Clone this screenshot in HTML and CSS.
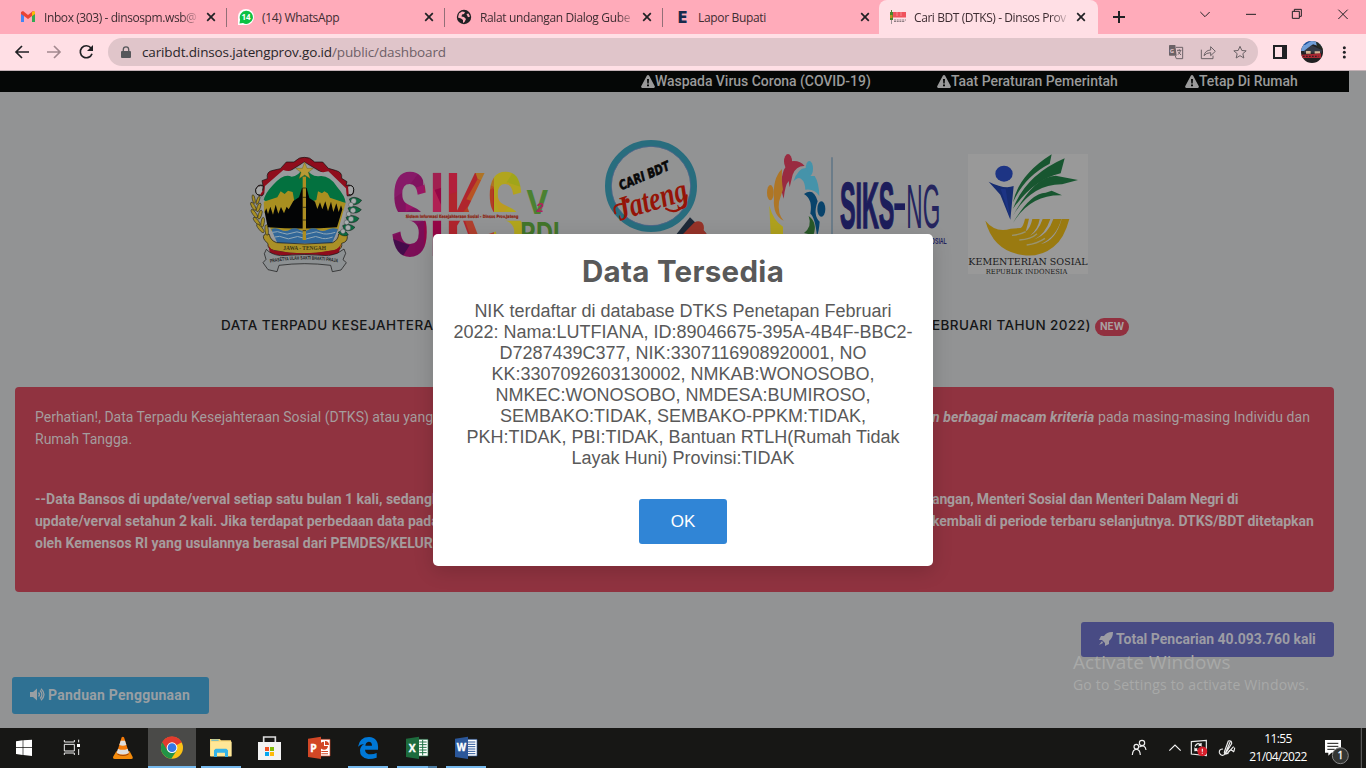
FILE: index.html
```html
<!DOCTYPE html>
<html lang="id">
<head>
<meta charset="utf-8">
<title>Cari BDT (DTKS)</title>
<link rel="stylesheet" href="styles.css">
</head>
<body>
<div class="screen">
  <header class="tabs">
    <div class="tab">
      <svg class="fav" viewBox="0 0 16 16"><path d="M1 3v10h3V7l4 3 4-3v6h3V3l-2-1-5 4-5-4z" fill="#ea4335"/><path d="M1 5v8h3V7z" fill="#4285f4"/><path d="M12 7v6h3V5z" fill="#34a853"/><path d="M12 3l2-1 1 1v2l-3 2z" fill="#fbbc04"/></svg>
      <span class="label fade t1">Inbox (303) - dinsospm.wsb@</span><svg class="x" viewBox="0 0 10 10"><path d="M1.200 1.200l7.600 7.600M8.800 1.200l-7.600 7.600"/></svg>
    </div>
    <div class="tab">
      <svg class="fav" viewBox="0 0 16 16"><path d="M0 16V8a8 8 0 1 1 8 8z" fill="#fff"/><path d="M1.500 14.500l.6-4A6.600 6.600 0 1 1 5 14z" fill="#0ec143"/><text x="8" y="11" text-anchor="middle" font-size="8" font-weight="700" fill="#fff">14</text></svg>
      <span class="label t2">(14) WhatsApp</span><svg class="x" viewBox="0 0 10 10"><path d="M1.200 1.200l7.600 7.600M8.800 1.200l-7.600 7.600"/></svg>
    </div>
    <div class="tab">
      <svg class="fav" viewBox="0 0 16 16"><circle cx="8" cy="8" r="7.200" fill="#202124"/><path d="M3 4.500l3-2 3 .5-1 2-2 .5-.5 2 2.500.5 2 2-1.500 3-1.500 1v-3l-2-1.500-3-1zM10.500 5l2-.5 1.500 3-2 .8z" fill="#ffabba"/></svg>
      <span class="label fade t3">Ralat undangan Dialog Gube</span><svg class="x" viewBox="0 0 10 10"><path d="M1.200 1.200l7.600 7.600M8.800 1.200l-7.600 7.600"/></svg>
    </div>
    <div class="tab last">
      <svg class="fav" viewBox="0 0 16 16"><text x="4" y="14" font-family="Inter" font-size="16" font-weight="900" textLength="9" lengthAdjust="spacingAndGlyphs" fill="#172a4c">E</text></svg>
      <span class="label t4">Lapor Bupati</span><svg class="x" viewBox="0 0 10 10"><path d="M1.200 1.200l7.600 7.600M8.800 1.200l-7.600 7.600"/></svg>
    </div>
    <div class="tab active">
      <svg class="fav" viewBox="0 0 16 16"><path d="M1 1h1v2H1zM0 3h3v8H0z" fill="#48882e"/><path d="M0 6h2.500v3H0z" fill="#b99120"/><path d="M1 11h1v4H1z" fill="#a09498"/><path d="M3 3h13v5.500H3z" fill="#f0525c"/><path d="M4 11h12M4 12.500h11" stroke="#8c7c81" stroke-dasharray="2 .7" fill="none"/><path d="M7 3v4M11 3v4" stroke="#f78a91" fill="none"/></svg>
      <span class="label fade t5">Cari BDT (DTKS) - Dinsos Prov</span><svg class="x" viewBox="0 0 10 10"><path d="M1.200 1.200l7.600 7.600M8.800 1.200l-7.600 7.600"/></svg>
    </div>
    <svg class="window-controls" viewBox="696 0 804 102" fill="none" stroke="#202124"><path d="M741 51h36M759 33v36" stroke-width="6"/><path d="M1003 36l14 14 14-14M1140 43h30M1279 34h21v21h-21zM1285 34v-6h21v21h-6M1417 29l28 28M1445 29l-28 28" stroke-width="3"/></svg>
  </header>
  <nav class="toolbar">
    <svg class="nav-icons" viewBox="0 102 324 108" fill="none" stroke-width="5"><path d="M87 156H49M66 138l-18 18 18 18" stroke="#202124"/><path d="M141 156h38M162 138l18 18-18 18" stroke="#a3898f"/><path d="M273 144a18 18 0 1 0 3 17" stroke="#202124"/><path d="M279 135v18h-18z" fill="#202124"/></svg>
    <div class="omnibox">
      <svg class="lock" viewBox="0 0 10 13"><path d="M1 5h8a1 1 0 0 1 1 1v5a1 1 0 0 1-1 1H1a1 1 0 0 1-1-1V6a1 1 0 0 1 1-1z" fill="#55565a"/><path d="M2.300 5V3.500a2.700 2.700 0 0 1 5.400 0V5" fill="none" stroke="#55565a" stroke-width="1.300"/></svg>
      <span class="url">caribdt.dinsos.jatengprov.go.id<span class="path">/public/dashboard</span></span>
      <svg class="omni-icons" viewBox="900 114 252 84" fill="none" stroke="#6b6266" stroke-width="3"><path d="M909 137q0-2 2-2h17l4 32h-21q-2 0-2-2z" fill="#6b6266" stroke="none"/><text x="911" y="158" font-size="18" font-weight="700" fill="#e0c5ca" stroke="none">G</text><path d="M930 142h20v34h-19l-3-8M933 151h13M940 148v4M944 151q-3 9-8 13M936 155l9 10"/><path d="M1006 149v27h35v-9M1014 167q3-16 20-17v-10l14 14-14 13v-9q-13 0-20 9z"/><path d="M1122 139l5.500 12.500 13 1-10 8.500 3 13-11.500-7-11.500 7 3-13-10-8.500 13-1z"/></svg>
    </div>
    <svg class="menu-icons" viewBox="1176 102 324 108"><path d="M1221 135h42v42h-42zM1227 141v30h21v-30z" fill="#202124" fill-rule="evenodd"/><clipPath id="avatar"><circle cx="1338" cy="156" r="33"/></clipPath><g clip-path="url(#avatar)"><path d="M1305 123h66v66h-66z" fill="#202022"/><path d="M1305 123h66v20l-30-10-24 20h-12z" fill="#709ed8"/><path d="M1305 123h30l-18 12h-12z" fill="#1d4f9c"/><path d="M1350 126h21v24l-18-9z" fill="#252b22"/><path d="M1314 153l22-17 32 14v8h-54z" fill="#343a45"/><path d="M1320 153h14v8h-14zM1346 154h16v7h-16z" fill="#d4b696"/><path d="M1305 164l60-4v14h-60z" fill="#a92732"/><path d="M1311 169h46" stroke="#3b1b24" stroke-width="4" stroke-dasharray="5 4"/></g><g fill="#202124"><circle cx="1435" cy="143" r="4.500"/><circle cx="1435" cy="157" r="4.500"/><circle cx="1435" cy="171" r="4.500"/></g></svg>
  </nav>

  <main class="page">
    <div class="marquee">
      <span class="note m1"><svg viewBox="0 0 14 13"><path d="M7 0q.8 0 1.200.7l5.600 10.600q.4 1.200-1 1.700H1.200q-1.400-.5-1-1.700L5.800.7Q6.200 0 7 0zM6 4l.3 4.500h1.400L8 4zM6 9.500v1.800h2V9.500z" fill-rule="evenodd"/></svg>Waspada Virus Corona (COVID-19)</span>
      <span class="note m2"><svg viewBox="0 0 14 13"><path d="M7 0q.8 0 1.200.7l5.600 10.600q.4 1.200-1 1.700H1.200q-1.400-.5-1-1.700L5.800.7Q6.200 0 7 0zM6 4l.3 4.500h1.400L8 4zM6 9.500v1.800h2V9.500z" fill-rule="evenodd"/></svg>Taat Peraturan Pemerintah</span>
      <span class="note m3"><svg viewBox="0 0 14 13"><path d="M7 0q.8 0 1.200.7l5.600 10.600q.4 1.200-1 1.700H1.200q-1.400-.5-1-1.700L5.800.7Q6.200 0 7 0zM6 4l.3 4.500h1.400L8 4zM6 9.500v1.800h2V9.500z" fill-rule="evenodd"/></svg>Tetap Di Rumah</span>
    </div>

    <div class="logos">
      <svg class="logo crest" viewBox="18 72 360 360">
        <path d="M66 198Q46 196 47 179Q52 161 69 166L66 152 82 146Q78 124 99 121L121 116 139 96 162 96Q178 80 193 82Q209 80 224 96L248 96 265 115 286 121Q308 126 305 145L321 155 318 166Q337 161 341 178Q344 198 322 198L284 150 193 96 106 150z" fill="#8f0d1c" stroke="#111" stroke-width="2"/>
        <path d="M60 195Q46 196 47 179Q52 163 70 168L68 182M324 168Q340 163 341 178Q341 198 326 194" fill="#a5a6a7" stroke="#111" stroke-width="3"/>
        <path d="M75 168L130 120Q160 132 193 96Q230 135 265 124L318 175 320 198 310 240 318 248 300 306 275 338H112L78 310 63 240 72 200z" fill="#999b9d"/>
        <path d="M71 210Q75 190 99 165Q131 128 155 140Q176 139 193 108Q212 140 235 139Q267 133 291 170Q316 199 317 218L260 225H100z" fill="#03713f"/>
        <path d="M71 215L112 202 122 184 134 192 144 182 158 186 163 214 185 216H210L229 210 234 184 246 190 253 184 263 190 270 203 317 219 310 244 294 302H94L72 244z" fill="#a98f20"/>
        <path d="M74 246l5-11 5 17 7-22 8 24 8-30 8 27 8-20 9 19 8-20 6 8 14-25 17-11 9-28h14l8 30 17 11 7 22 8-20 7 21 9-24 8 30 9-29 7 31 9-26 7 26 7-20 4 12-16 54q-105 7-208 0z" fill="#030405"/>
        <path d="M94 297q14-6 28 2t28 0 28 0 28 0 28 0 28 0 32-2l-18 43H112z" fill="#316799"/><path d="M98 307q15-5 29 2t29 0 29 0 29 0 29 0 43-2M105 321q14-5 27 2t27 0 27 0 27 0 27 0 38-2" fill="none" stroke="#91a8b7" stroke-width="3"/>
        <path d="M188 140h10v190h-10z" fill="#ad8e22"/><path d="M188 174h10M188 202h10M188 232h10M188 270h10M188 302h10" stroke="#111" stroke-width="2"/>
        <path d="M194 96l7 19h19l-15 12 6 19-17-11-17 11 6-19-16-12h20z" fill="#b79a35" stroke="#514913"/>
        <path d="M77 312q-12 5-3 19l10 10q-3 15 17 20 90 22 192-1 15-5 12-20 18-4 17-20-3-18-26-8-1 18-18 26-83 8-168 0-19-6-22-25z" fill="#aa9027" stroke="#111" stroke-width="2"/>
        <path d="M85 343q4 19 28 20 78 14 156-1 25 0 34-20l-7 29q-98 20-206 0z" fill="#8f0d1c"/>
        <path d="M79 358l-6 13 5 17-9 10 15 21 27 6 6-19q77-10 155 0l5 19 26-5 16-22-10-9 8-19-5-13q-17 16-46 20-73-7-145 0-29-4-42-19z" fill="#8c9092" stroke="#111" stroke-width="2"/>
        <text x="194" y="360" font-family="Liberation Serif" font-size="16" font-weight="700" text-anchor="middle" textLength="128" lengthAdjust="spacingAndGlyphs" fill="#3a3514">JAWA - TENGAH</text>
        <path id="motto" d="M91 398q102-19 206 0" fill="none"/><text font-family="Liberation Sans" font-size="15" font-weight="700" fill="#1b1d1d"><textPath href="#motto" textLength="203" lengthAdjust="spacingAndGlyphs">PRASETYA ULAH SAKTI BHAKTI PRAJA</textPath></text>
        <g fill="#a89026" stroke="#151510" stroke-width="1.500"><ellipse cx="41" cy="207" rx="4" ry="13" transform="rotate(-10 41 207)"/><ellipse cx="54" cy="211" rx="4" ry="13" transform="rotate(20 54 211)"/><ellipse cx="40" cy="229" rx="5" ry="14" transform="rotate(-30 40 229)"/><ellipse cx="56" cy="232" rx="5" ry="14" transform="rotate(20 56 232)"/><ellipse cx="43" cy="251" rx="5" ry="15" transform="rotate(-35 43 251)"/><ellipse cx="60" cy="254" rx="5" ry="14" transform="rotate(18 60 254)"/><ellipse cx="50" cy="274" rx="5" ry="15" transform="rotate(-38 50 274)"/><ellipse cx="68" cy="277" rx="5" ry="15" transform="rotate(8 68 277)"/><ellipse cx="61" cy="295" rx="5" ry="16" transform="rotate(-40 61 295)"/><ellipse cx="80" cy="300" rx="5" ry="16" transform="rotate(-5 80 300)"/></g>
        <g fill="#0b6a40" stroke="#101915" stroke-width="1.500"><path d="M328 207q15-12 37 4-10 15-30 13z"/><path d="M324 234q17-13 40 5-12 14-34 9z"/><path d="M318 262q18-13 39 3-9 17-32 12z"/><path d="M308 287q17-11 37 5-12 15-32 8z"/><path d="M294 307q20-14 31 8-18 8-31-8z"/></g>
        <g fill="#a8adae" stroke="#30383a"><circle cx="341" cy="213" r="8"/><circle cx="333" cy="224" r="7"/><circle cx="339" cy="241" r="8"/><circle cx="326" cy="252" r="7"/><circle cx="333" cy="267" r="8"/><circle cx="320" cy="277" r="7"/><circle cx="324" cy="293" r="8"/><circle cx="309" cy="304" r="7"/></g>
      </svg>
      <svg class="logo siks" viewBox="450 72 516 360">
        <defs><clipPath id="siks-word"><text x="452" y="379" font-family="Liberation Sans" font-size="362" font-weight="700" textLength="402" lengthAdjust="spacingAndGlyphs" stroke="#000">SIKS</text></clipPath></defs>
        <g clip-path="url(#siks-word)">
          <path d="M450 110h100v280H450z" fill="#80145f"/><path d="M450 110h100l-54 72-46 30z" fill="#871a68"/><path d="M497 183l60-20v50l-60 33z" fill="#981565"/><path d="M450 323l110-55v120H450z" fill="#7c0e57"/><path d="M450 323l59 23-28 44h-31z" fill="#440c4b"/>
          <path d="M553 110h60v280h-60z" fill="#950646"/><path d="M553 110h60v60l-60 20z" fill="#a12050"/><path d="M556 204l25-30 32 72h-57z" fill="#b02053"/>
          <path d="M615 110h150v280H615z" fill="#b0252d"/><path d="M615 110h60v66l-60 22z" fill="#b31e3b"/><path d="M700 110h68v66l-55-29z" fill="#af7425"/><path d="M713 147l54 26-63 43-25-8z" fill="#b85422"/><path d="M760 173v73h-90l27-32z" fill="#b23f22"/><path d="M675 272h90v60h-69z" fill="#b1402e"/>
          <path d="M762 110h92v280h-92z" fill="#b1a51e"/><path d="M829 110h30v66l-59-19z" fill="#a0a51a"/><path d="M762 206l43-50 24 47-46 53z" fill="#bc9b20"/>
        </g>
        <path d="M450 246h396v26H450z" fill="#929394"/>
        <text x="497" y="263" font-family="DejaVu Sans" font-size="13" font-weight="700" textLength="338" lengthAdjust="spacingAndGlyphs" fill="#8c210f" stroke="#8c210f" stroke-width=".6">Sistem Informasi Kesejahteraan Sosial - Dinsos Prov.Jateng</text>
        <text x="858" y="253" font-family="Inter" font-size="98" font-weight="700" textLength="68" lengthAdjust="spacingAndGlyphs" fill="#4b8131">V</text><text x="889" y="246" font-size="40" font-weight="700" font-style="italic" fill="#af235c">2</text><text x="841" y="343" font-family="Inter" font-size="90" font-weight="700" textLength="118" lengthAdjust="spacingAndGlyphs" fill="#42752a">RDI</text>
      </svg>
      <svg class="logo search-logo" viewBox="120 24 360 408">
        <path d="M348 314l42-52 48 48v20h-90z" fill="#1d2938"/><path d="M367 314l35-36q12-8 23-1 9 8 6 24l15 18-8 20h-75z" fill="#963329"/><circle cx="273" cy="168" r="128" fill="#929393" stroke="#286d7e" stroke-width="20"/><circle cx="273" cy="168" r="119" fill="none" stroke="#58628d" stroke-width="2"/>
        <text transform="translate(184 181) rotate(-23)" font-family="DejaVu Sans" font-size="39" font-weight="700" font-style="italic" textLength="161" lengthAdjust="spacingAndGlyphs" fill="#080808" stroke="#080808" stroke-width="2">CARI BDT</text>
        <text transform="translate(180 272) rotate(-17)" font-family="Liberation Serif" font-size="100" font-weight="700" font-style="italic" textLength="218" lengthAdjust="spacingAndGlyphs" fill="#951407">Jateng</text>
        <path d="M166 250q-11-26 20-28M318 236q28 18 52-8 10-12 10-32" fill="none" stroke="#951407" stroke-width="6" stroke-linecap="round"/><circle cx="202" cy="212" r="7" fill="#951407"/>
      </svg>
      <svg class="logo siksng" viewBox="36 42 564 360">
        <g fill="#992b40"><ellipse cx="114" cy="64" rx="12" ry="22"/><path d="M98 101q6-24 25-37 26-4 41 14-26-1-36 26l-9 38-3-19q-11 12-15 53-14-38-3-75z"/></g><g fill="#4593aa"><ellipse cx="178" cy="86" rx="11" ry="23"/><path d="M130 125q14-43 40-41l10 24h14q13 20 14 60-14-23-42-19-1-23-10-30-10-13-26 6z"/></g><g fill="#ae7626"><ellipse cx="61" cy="158" rx="10" ry="23"/><path d="M96 87q-29 28-24 89-4 50 29 66-19-21-14-57l12-37q-5-24-3-61z"/></g><path d="M58 197q12 45 41 63v42H63z" fill="#afa11e"/><g fill="#08436b"><ellipse cx="214" cy="207" rx="12" ry="23"/><path d="M162 162q29-21 41 22-15 42 6 61-2 28-8 43-6-57-20-67 8-43-19-59z"/></g><path d="M176 228q28 21 14 58l-28-7q25-19 14-51z" fill="#285828"/><path d="M246 52v250" stroke="#587184" stroke-width="4"/>
        <text x="270" y="265" font-family="Liberation Sans" font-size="194" font-weight="700" textLength="163" lengthAdjust="spacingAndGlyphs" fill="#1d1d5b" stroke="#1d1d5b" stroke-width="5">SIKS</text><path d="M433 190h32v20h-32z" fill="#1d1d5b"/><text x="469" y="265" font-family="Liberation Sans" font-size="190" textLength="102" lengthAdjust="spacingAndGlyphs" fill="#25255f">NG</text><text x="543" y="311" font-family="Liberation Sans" font-size="25" font-weight="700" textLength="47" lengthAdjust="spacingAndGlyphs" fill="#24245d">OSIAL</text>
      </svg>
      <svg class="logo kemensos" viewBox="654 42 360 360">
        <path d="M654 42h360v360H654z" fill="#999"/><ellipse cx="762" cy="101" rx="26" ry="24" fill="#1d3484"/><path d="M716 125q47 24 75 13l-10 101-30-75z" fill="#172d72"/><path d="M752 147h15l13 85z" fill="#1d3484"/>
        <g fill="#185630"><path d="M789 187q17-82 116-144l-6 28q-77 40-110 116z"/><path d="M789 206q39-101 155-151l-12 45q-80 18-143 106z"/><path d="M789 227q64-118 128-120l67 13-48 13q-91-1-147 94z"/><path d="M789 249q51-89 98-91l18-6 31 14q-95-3-147 83z"/></g>
        <path d="M706 242q31 38 76 24l30-2q8-4 13-28h12q-6 26-10 38 14-8 20-37h22q-5 31-29 50 24-11 38-50h23q-15 46-49 62 43-15 58-62h24q-14 53-61 75 44-9 62-75h23q-16 61-48 84-40 32-92 24-88-12-112-103z" fill="#9a7a10"/><path d="M786 286q26-2 41-11M808 300q35-2 53-19M830 315q31-4 55-20" fill="none" stroke="#99936e" stroke-width="4"/>
        <text x="655" y="374" font-family="DejaVu Serif" font-size="27" textLength="358" lengthAdjust="spacingAndGlyphs" fill="#191919">KEMENTERIAN SOSIAL</text><text x="707" y="401" font-family="DejaVu Serif" font-size="21" textLength="245" lengthAdjust="spacingAndGlyphs" fill="#191919">REPUBLIK INDONESIA</text>
      </svg>
    </div>

    <h1 class="heading"><span class="h-left">DATA TERPADU KESEJAHTERA</span><span class="h-right">EBRUARI TAHUN 2022)</span><span class="new">NEW</span></h1>

    <section class="alert">
      <p class="intro"><span class="a1">Perhatian!, Data Terpadu Kesejahteraan Sosial (DTKS) atau yang</span><span class="a2"><b><i>n berbagai macam kriteria</i></b> pada masing-masing Individu dan</span><span>Rumah Tangga.</span></p>
      <p class="detail"><span class="b1">--Data Bansos di update/verval setiap satu bulan 1 kali, sedangk</span><span class="b2">angan, Menteri Sosial dan Menteri Dalam Negri di</span><span class="b3">update/verval setahun 2 kali. Jika terdapat perbedaan data pada</span><span class="b4">kembali di periode terbaru selanjutnya. DTKS/BDT ditetapkan</span><span class="b5">oleh Kemensos RI yang usulannya berasal dari PEMDES/KELUR</span></p>
    </section>
    <div class="total"><svg viewBox="0 0 14 14"><path d="M14 0Q8-.2 5 4H2L0 8h3l3 3v3l4-2V9q4-3 4-9zM3 9l-3 4 4-2z"/></svg><span>Total Pencarian 40.093.760 kali</span></div>
    <div class="guide"><svg viewBox="0 0 15 13"><path d="M0 4h3l4-3.500v12L3 9H0z"/><path d="M8.500 4.500q2 2 0 4M10 2.500q4 4 0 8M11 .8q6 5.700 0 11.400" fill="none" stroke="#999fa3" stroke-width="1.300"/></svg><span>Panduan Penggunaan</span></div>
  </main>

  <footer class="taskbar">
    <svg class="w48" viewBox="0 354 144 120"><path d="M48 394l20-3v21H48zM70 391l26-2v23H70zM48 414h20v21l-20-3zM70 414h26v24l-26-3z" fill="#fff"/></svg>
    <svg class="w50" viewBox="144 354 150 120" fill="none" stroke="#eee" stroke-width="3"><path d="M193 390v6h30v-6M193 435v-6h30v6M193 403h30v20h-30zM236 389v8M236 417v18"/><path d="M231 402h9v9h-9z" fill="#fff" stroke="none"/></svg>
    <svg class="w50" viewBox="294 354 150 120"><path d="M349 424h40l9 17q2 6-4 6h-50q-6 0-5-6z" fill="#f48b0b"/><path d="M349 427l4 7q16 8 32 0l4-7z" fill="#a94a05"/><path d="M365 382q3-4 7 0l15 48q-18 10-37 0z" fill="#f47b0a"/><path d="M362 392h13l4 13q-10 4-21 0zM354 416q14 7 29 0l4 13q-18 9-37 0z" fill="#dedede"/></svg>
    <svg class="w48" viewBox="444 354 144 120"><path d="M444 354h144v120H444z" fill="#4a4a48"/><circle cx="516" cy="413" r="33" fill="#fbc116"/><path d="M487 397a33 33 0 0 1 58 0l-29 16z" fill="#e33b2e"/><path d="M487 397a33 33 0 0 0 27 49l17-26-15-8z" fill="#229447"/><path d="M516 397h29q-13-17-30-17-18 0-28 17l15 24z" fill="#e33b2e"/><circle cx="516" cy="413" r="16" fill="#fff"/><circle cx="516" cy="413" r="13" fill="#3478e5"/><path d="M444 468h144v6H444z" fill="#76b9ed"/></svg>
    <svg class="w49" viewBox="588 354 147 120"><path d="M630 387h29l4 4h30v48h-63z" fill="#f9d978"/><path d="M634 389h22v3h-22z" fill="#43b2df"/><path d="M632 395h63v44h-63z" fill="#ffe797"/><path d="M642 441v-20l5-5h32l5 5v20h-9v-13h-24v13z" fill="#35b4e8"/><path d="M603 468h120v6H603z" fill="#76b9ed"/></svg>
    <svg class="w49" viewBox="735 354 147 120"><path d="M791 398v-17h35v17" fill="none" stroke="#ddd" stroke-width="5"/><path d="M774 396h69v54h-69z" fill="#f3f3f3"/><path d="M795 411h12v12h-12z" fill="#f35325"/><path d="M810 411h12v12h-12z" fill="#81bc06"/><path d="M795 426h12v12h-12z" fill="#05a6f0"/><path d="M810 426h12v12h-12z" fill="#ffba08"/></svg>
    <svg class="w49" viewBox="882 354 147 120"><path d="M957 388h33v50h-33z" fill="#fff" stroke="#d24625" stroke-width="2"/><path d="M972 395v13h12a12 12 0 1 1-12-13zM975 393a12 12 0 0 1 12 12h-12zM964 423h20v3h-20zM964 430h20v3h-20z" fill="#d24625"/><path d="M924 386l39-6v67l-39-6z" fill="#d24726"/><text x="931" y="425" font-size="31" font-weight="700" fill="#fff" stroke="#fff">P</text></svg>
    <svg class="w49" viewBox="1029 354 147 120"><path d="M1074 410q5-29 33-29 30 2 27 38h-39q1 14 18 14 8 0 17-4v14q-11 4-25 4-26-4-25-26 1-12 12-19-11 1-18 8zM1096 407h20q0-12-10-12-9 1-10 12z" fill="#0078d7" fill-rule="evenodd"/><path d="M1044 468h120v6h-120z" fill="#76b9ed"/></svg>
    <svg class="w49" viewBox="1176 354 147 120"><path d="M1250 388h34v50h-34z" fill="#fff" stroke="#217346" stroke-width="2"/><path d="M1258 396h22M1258 404h22M1258 412h22M1258 420h22M1258 428h22M1268 390v46" stroke="#217346" stroke-width="3"/><path d="M1218 386l39-6v67l-39-6z" fill="#1d6b3d"/><text x="1226" y="425" font-size="31" font-weight="700" fill="#fff" stroke="#fff">X</text><path d="M1191 468h93v6h-93z" fill="#76b9ed"/><path d="M1284 468h27v6h-27z" fill="#4d7da3"/></svg>
    <svg class="w49" viewBox="1323 354 147 120"><path d="M1397 388h34v50h-34z" fill="#fff" stroke="#2b579a" stroke-width="2"/><path d="M1404 396h22M1404 403h22M1404 410h22M1404 417h22M1404 424h22M1404 431h22" stroke="#2b579a" stroke-width="3"/><path d="M1365 386l39-6v67l-39-6z" fill="#2b579a"/><text x="1370" y="424" font-size="29" font-weight="700" textLength="28" lengthAdjust="spacingAndGlyphs" fill="#fff" stroke="#fff">W</text><path d="M1338 468h120v6h-120z" fill="#76b9ed"/></svg>
    <svg class="tray" viewBox="360 384 375 120" fill="none" stroke="#eee" stroke-width="3.500"><circle cx="426" cy="429" r="8"/><circle cx="409" cy="440" r="7"/><path d="M397 465q1-17 12-17t12 17M418 441q18-9 20 9M508 452l17-17 17 17"/><path d="M574 425l45-4v46l-45-5z"/><path d="M585 439q8-15 18-3v-7M603 436h-7M603 445q-8 14-18 2v7M585 447h7" stroke-width="4"/><circle cx="607" cy="454" r="13" fill="#d71f2b" stroke="#d71f2b"/><path d="M607 446v9M607 458v3"/><path d="M669 447q-12 0-11 11 6 13 17 5l20-32q1-11-10-8l-11 30q-4 12 7 8l20-21M683 462q4-16 15-10 4 9 6-9M692 422l-17 40"/></svg>
    <div class="clock"><span>11:55</span><span class="date">21/04/2022</span></div>
    <svg class="notice" viewBox="933 384 165 120"><path d="M975 420h48v38h-29l-9 9v-9h-10z" fill="#fff"/><path d="M982 430h33M982 439h33M982 448h22" stroke="#171715" stroke-width="3"/><circle cx="1021" cy="467" r="24" fill="#343634" stroke="#888" stroke-width="3"/><text x="1021" y="477" text-anchor="middle" font-size="31" fill="#fff" stroke="#fff">1</text><path d="M1084 384v120" stroke="#666" stroke-width="3"/></svg>
  </footer>

  <aside class="watermark"><p class="wm1">Activate Windows</p><p class="wm2">Go to Settings to activate Windows.</p></aside>
  <div class="modal" role="dialog">
    <h2>Data Tersedia</h2>
    <p>NIK terdaftar di database DTKS Penetapan Februari<br>2022: Nama:LUTFIANA, ID:89046675-395A-4B4F-BBC2-<br>D7287439C377, NIK:3307116908920001, NO<br>KK:3307092603130002, NMKAB:WONOSOBO,<br>NMKEC:WONOSOBO, NMDESA:BUMIROSO,<br>SEMBAKO:TIDAK, SEMBAKO-PPKM:TIDAK,<br>PKH:TIDAK, PBI:TIDAK, Bantuan RTLH(Rumah Tidak<br>Layak Huni) Provinsi:TIDAK</p>
    <button>OK</button>
  </div>
</div>
</body>
</html>
```
FILE: styles.css
```css
* { box-sizing: border-box; }
body { margin: 0; font-family: "Open Sans", "Noto Sans", sans-serif; }
p, h1, h2 { margin: 0; }
svg { display: block; flex: none; }
.screen { position: relative; width: 1366px; height: 768px; overflow: hidden; display: flex; flex-direction: column; }

.tabs { height: 34px; background: #ffabba; display: flex; padding-left: 9px; flex: none; }
.tab { width: 218px; height: 34px; display: flex; align-items: center; padding: 0 11px 0 11px; position: relative; font-size: 12px; color: #3e2d32; letter-spacing: -.16px; }
.tab:not(.last):not(.active)::after { content: ""; position: absolute; right: 0; top: 8px; width: 1px; height: 19px; background: #926f77; }
.tab.active { background: #ffdfe5; border-radius: 8px 8px 0 0; margin-left: -2px; width: 219px; padding-right: 12px; }
.fav { width: 16px; height: 16px; margin-right: 8px; }
.label { flex: 1; white-space: nowrap; overflow: hidden; }
.fade { -webkit-mask-image: linear-gradient(90deg, #000 88%, transparent); mask-image: linear-gradient(90deg, #000 88%, transparent); margin-right: 6px; }
.t1 { letter-spacing: -.41px; }
.t3 { letter-spacing: -.36px; }
.t4 { letter-spacing: -.33px; }
.t2 { letter-spacing: -.3px; }
.t5 { letter-spacing: -.42px; }
.x { width: 10px; height: 10px; fill: none; stroke: #202124; stroke-width: 1.7; }
.window-controls { width: 268px; height: 34px; }

.toolbar { height: 37px; background: #ffdfe5; border-bottom: 1px solid #c3b1b5; display: flex; align-items: center; flex: none; }
.nav-icons, .menu-icons { width: 108px; height: 36px; }
.omnibox { width: 1150px; height: 28px; border-radius: 14px; background: #e0c5ca; display: flex; align-items: center; padding: 0 8px 0 13px; }
.lock { width: 10px; height: 13px; }
.url { flex: 1; margin-left: 11px; font-size: 13.500px; color: #2a2529; letter-spacing: -.13px; white-space: nowrap; }
.path { color: #6e6067; }
.omni-icons { width: 84px; height: 28px; }

.page { height: 657px; background: #929394; font-family: Roboto, sans-serif; font-size: 14px; display: flex; flex-direction: column; flex: none; }
.marquee { width: 1349px; height: 21px; background: #050706; display: flex; align-items: center; padding: 0 0 1px 641px; color: #9a9a9a; font-weight: 500; flex: none; }
.note { display: flex; align-items: center; white-space: nowrap; letter-spacing: -.04px; }
.note svg { width: 14px; height: 13px; fill: #9a9a9a; }
.m1 { width: 296px; }
.m2 { width: 248px; }

.logos { display: flex; align-items: flex-end; height: 182px; padding-left: 246px; flex: none; }
.logo { height: 120px; }
.crest { width: 120px; }
.siks { width: 172px; margin-left: 24px; }
.search-logo { width: 120px; height: 136px; margin-left: 38px; }
.siksng { width: 188px; margin-left: 42px; }
.kemensos { width: 120px; margin-left: 18px; }

.heading { display: flex; align-items: center; height: 113px; padding: 0 0 12px 221px; font: 500 13.500px Inter, sans-serif; color: #151617; white-space: nowrap; flex: none; }
.h-left { width: 711px; letter-spacing: .47px; }
.h-right { width: 163px; letter-spacing: .42px; }
.new { width: 34px; height: 18px; border-radius: 9px; background: #91303f; color: #a9a0a1; font-size: 10px; font-weight: 700; line-height: 17px; text-align: center; margin-top: 4px; }

.alert { margin-left: 15px; width: 1319px; height: 205px; border-radius: 4px; background: #903340; padding: 19px 0 0 20px; color: #a59c9d; line-height: 22px; flex: none; }
.alert p { display: grid; grid-template-columns: 897px 1fr; white-space: nowrap; }
.a2 { letter-spacing: .09px; }
.b1 { letter-spacing: .01px; }
.b2 { letter-spacing: -.11px; }
.b4 { letter-spacing: -.05px; }
.detail { font-weight: 700; padding-top: 38px; }
.total, .guide { display: flex; align-items: center; font-weight: 700; color: #9c9ca4; border-radius: 3px; white-space: nowrap; flex: none; }
.total { width: 253px; height: 35px; background: #484b84; margin: 30px 0 0 1081px; padding: 0 0 2px 18px; gap: 3px; }
.total svg { width: 14px; height: 14px; fill: #9c9ca4; }
.guide { width: 197px; height: 37px; background: #2f7193; margin: 20px 0 0 12px; padding: 0 0 2px 18px; gap: 3px; color: #999fa3; letter-spacing: .25px; }
.guide svg { width: 15px; height: 13px; fill: #999fa3; }

.taskbar { height: 40px; background: #171715; display: flex; flex: none; }
.taskbar svg { height: 40px; }
.w48 { width: 48px; }
.w49 { width: 49px; }
.w50 { width: 50px; }
.taskbar .tray { width: 125px; margin-left: auto; }
.clock { width: 66px; display: flex; flex-direction: column; align-items: center; font-size: 12px; line-height: 18px; padding-top: 2px; color: #fff; letter-spacing: -.6px; }
.notice { width: 55px; }

.watermark { position: absolute; left: 1073px; top: 649px; color: #a8a9a8; white-space: nowrap; }
.wm1 { font-size: 19px; line-height: 26px; letter-spacing: .1px; }
.wm2 { font-size: 14px; line-height: 20px; letter-spacing: .19px; }

.modal { position: absolute; left: 433px; top: 234px; width: 500px; height: 332px; border-radius: 5px; background: #fff; box-shadow: 0 5px 20px rgba(0,0,0,.16); display: flex; flex-direction: column; align-items: center; padding-top: 19px; color: #595959; text-align: center; }
.modal h2 { font: 700 29.500px/36px Inter, sans-serif; letter-spacing: .3px; }
.modal p { font: 18px/21px "Liberation Sans", Arial, sans-serif; margin-top: 12px; white-space: nowrap; }
.modal button { margin-top: 30px; width: 88px; height: 45px; border: 0; border-radius: 3px; background: #3085d6; color: #fff; font: 17px "Liberation Sans", Arial, sans-serif; }
```
